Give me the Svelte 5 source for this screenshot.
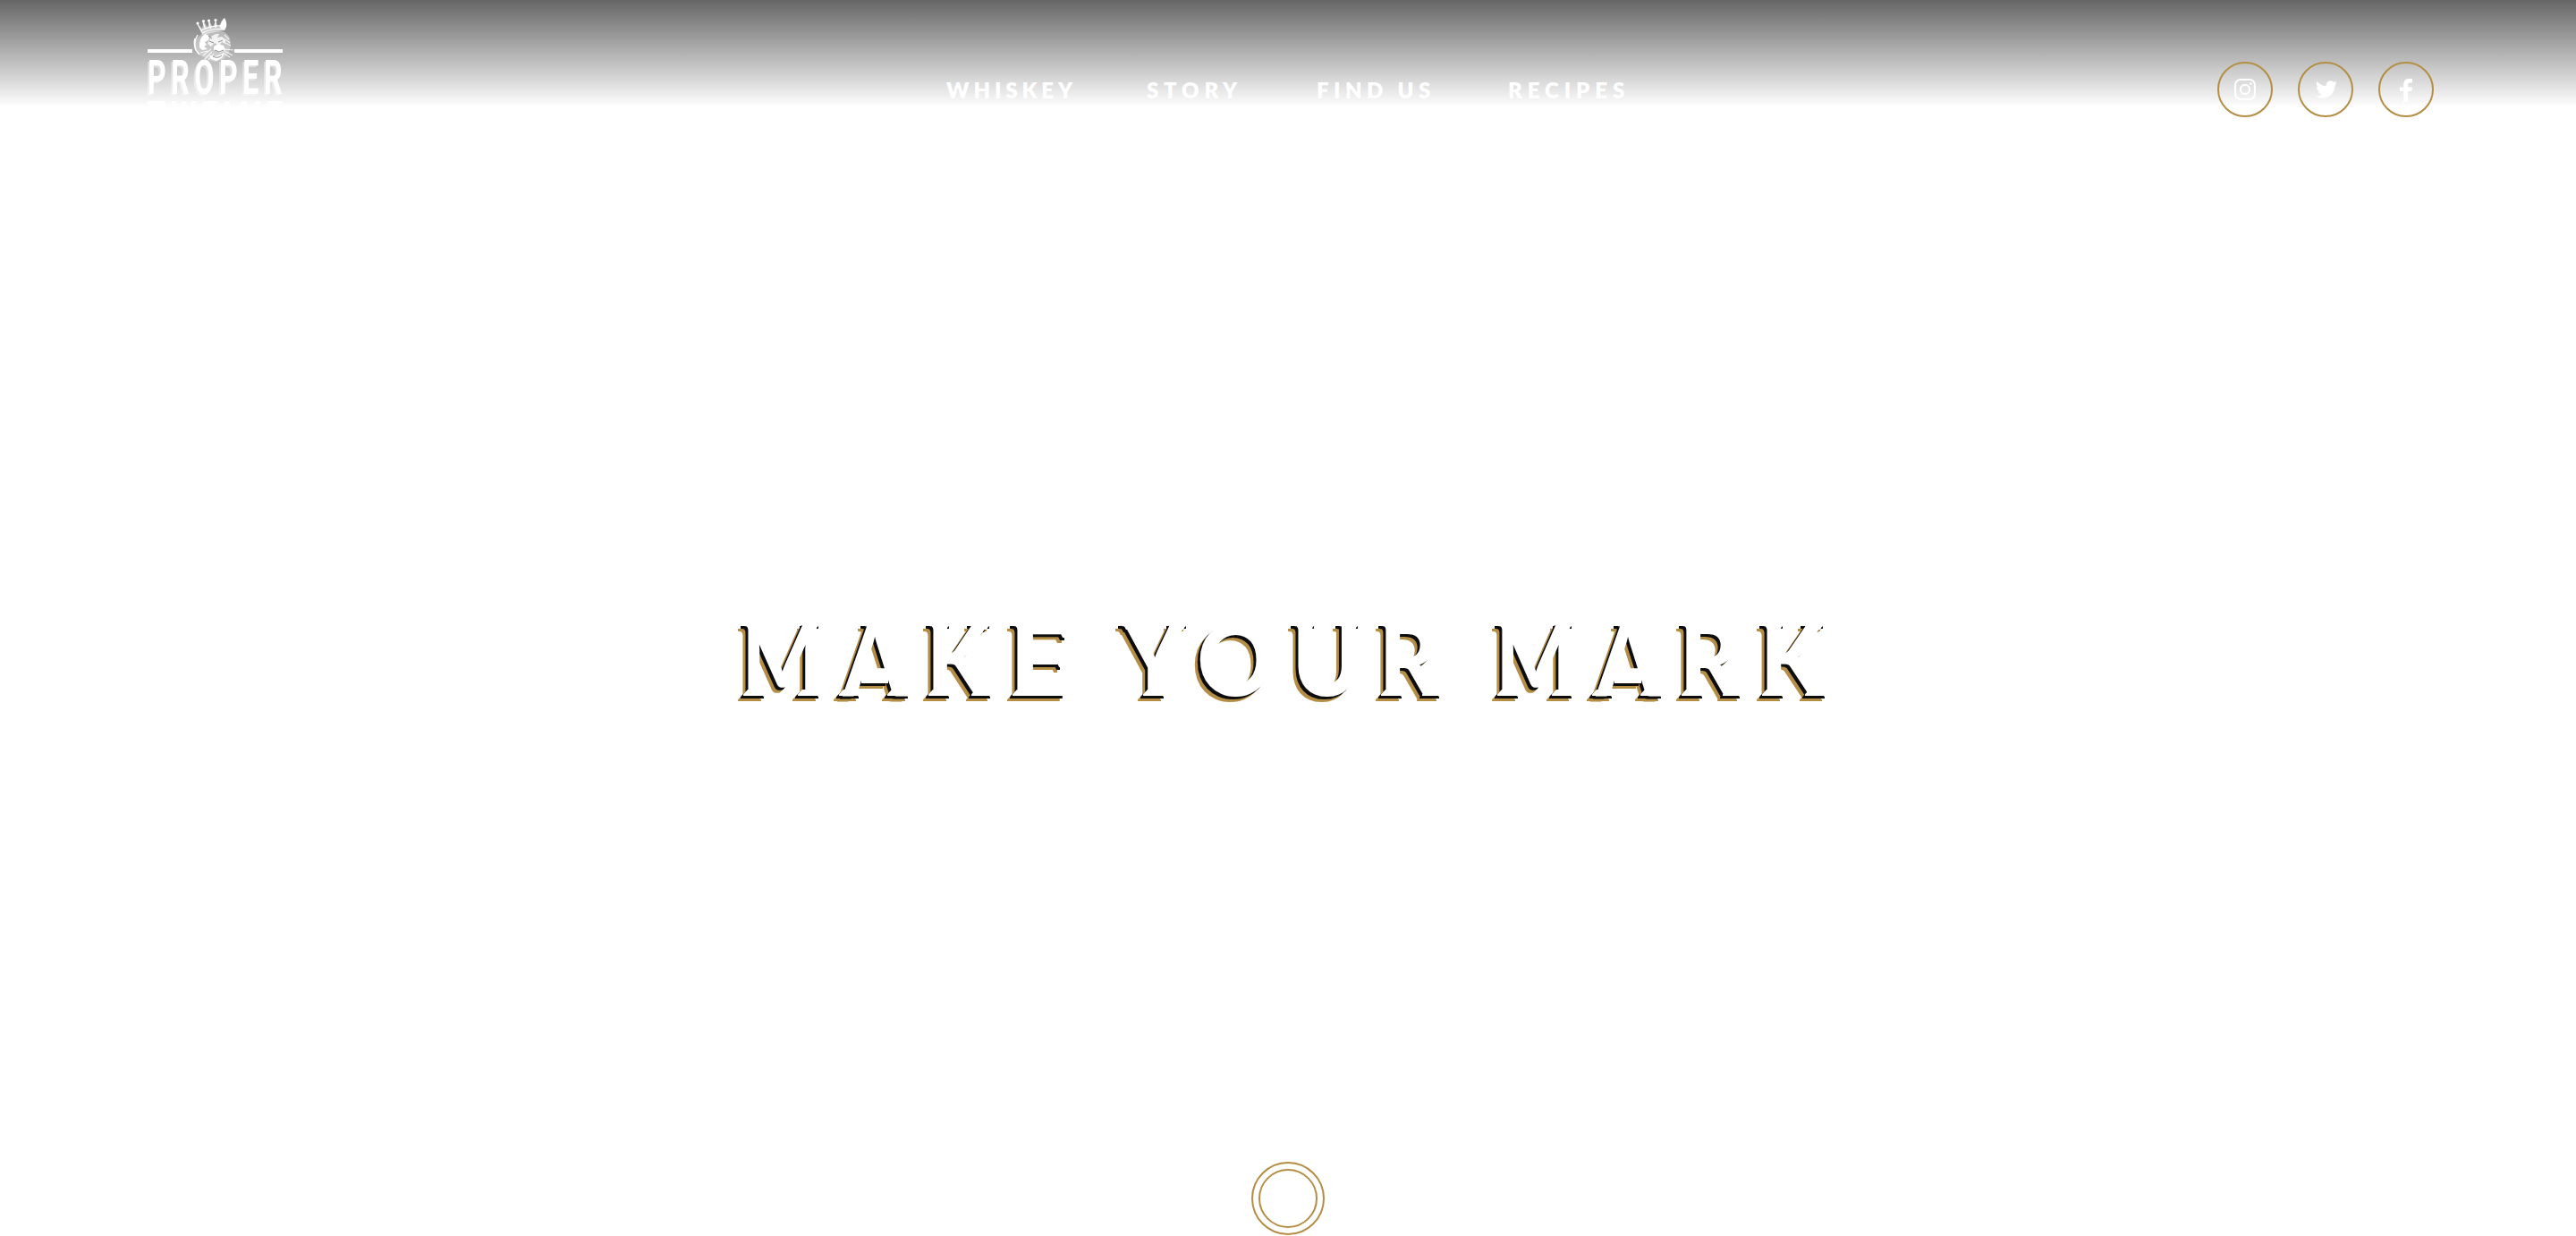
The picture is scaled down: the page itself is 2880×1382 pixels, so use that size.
<script>
  const ctx = document.createElement('canvas').getContext('2d');

  // Ink extents of a string in a given font, used to fit lettering to its box.
  function ink(font, text) {
    ctx.font = font;
    const m = ctx.measureText(text);
    return { left: m.actualBoundingBoxLeft, width: m.actualBoundingBoxLeft + m.actualBoundingBoxRight };
  }

  const headFont = '900 113px Lato';

  // l / r: body of each letter; the other lists are the small serif accents around it.
  const headline = [
    { c: 'M', l: 836, r: 913, feet: [[831, 857], [892, 918]], caps: [[831, 852], [897, 918]] },
    { c: 'A', l: 941, r: 1015, feet: [[938, 963], [992, 1018]], caps: [[965, 985]], bars: [[963, 993]] },
    { c: 'K', l: 1043, r: 1108, feet: [[1038, 1064], [1086, 1110]], caps: [[1038, 1064], [1084, 1109]] },
    { c: 'E', l: 1137, r: 1191, feet: [[1132, 1154]], caps: [[1132, 1154]], arms: [[1180, 1193]], mids: [[1176, 1188]] },
    { c: ' ', l: 1200, r: 1240 },
    { c: 'Y', l: 1255, r: 1327, feet: [[1278, 1304]], caps: [[1253, 1273], [1307, 1329]] },
    { c: 'O', l: 1341, r: 1421 },
    { c: 'U', l: 1451, r: 1516, caps: [[1446, 1472], [1496, 1521]] },
    { c: 'R', l: 1549, r: 1610, feet: [[1544, 1570], [1590, 1612]], caps: [[1544, 1566]] },
    { c: ' ', l: 1620, r: 1660 },
    { c: 'M', l: 1679, r: 1755, feet: [[1674, 1700], [1735, 1760]], caps: [[1674, 1695], [1739, 1760]] },
    { c: 'A', l: 1783, r: 1857, feet: [[1780, 1805], [1834, 1860]], caps: [[1807, 1827]], bars: [[1805, 1835]] },
    { c: 'R', l: 1885, r: 1946, feet: [[1880, 1906], [1926, 1948]], caps: [[1880, 1902]] },
    { c: 'K', l: 1975, r: 2041, feet: [[1970, 1996], [2018, 2043]], caps: [[1970, 1996], [2016, 2041]] }
  ].map((g, i, all) => {
    const advance = (i + 1 < all.length ? all[i + 1].l : g.r) - g.l;
    if (g.c === ' ') return { ...g, advance, scale: 1, shift: 0, serifs: [] };
    const m = ink(headFont, g.c);
    const scale = (g.r - g.l) / m.width;
    const place = (kind, spans = []) => spans.map(([a, b]) => ({ kind, x: a - g.l, w: b - a }));
    const serifs = [
      ...place('foot', g.feet),
      ...place('cap', g.caps),
      ...place('bar', g.bars),
      ...place('arm', g.arms),
      ...place('mid', g.mids)
    ];
    return { ...g, advance, scale, shift: m.left * scale, serifs };
  });

  const nav = [
    { label: 'WHISKEY', left: 1058, right: 1200 },
    { label: 'STORY', left: 1282, right: 1384 },
    { label: 'FIND US', left: 1472, right: 1598 },
    { label: 'RECIPES', left: 1686, right: 1815 }
  ].map((n, i, all) => {
    const m = ink('800 24px Lato', n.label);
    return {
      label: n.label,
      width: n.right - n.left,
      gap: i ? n.left - all[i - 1].right : 0,
      spacing: (n.right - n.left - m.width) / (n.label.length - 1)
    };
  });

  const socials = ['instagram', 'twitter', 'facebook'];
</script>

<div class="page">
  <header>
    <a class="logo" href="#home" aria-label="Proper Twelve">
      <svg viewBox="0 0 160 120" width="160" height="120">
        <g fill="#fff">
          <rect x="5" y="55" width="50" height="4" />
          <rect x="102" y="55" width="54" height="4" />
          <circle cx="61" cy="26" r="1.6" /><circle cx="67.5" cy="23.5" r="1.6" />
          <circle cx="73.5" cy="23" r="1.6" /><circle cx="81" cy="22.5" r="1.6" />
          <path d="M61 27l5 5 2-8 4 7 2-8 4 8 3-8 3 8 4-8 2 11-24 5z" opacity=".55" />
          <path d="M61 27l5 9M67 25l3 8M73.5 24l2 8M81 24v7M66 37q11-6 25-4M65 34q12-6 24-5" fill="none" stroke="#fff" stroke-width="1.2" />
          <path d="M86 31q1-8 5-11 3 5 2 10l-2 4z" />
          <path d="M66 38q-8 4-9 13 1 8 7 11l9 5 8 2 9-3 6-8q3-8 1-15-3-7-9-8-11-1-22 3z" opacity=".35" />
          <path d="M61 39q-5 8-2 17l4 5M58 43q-2 6 1 13" fill="none" stroke="#fff" stroke-width="1.3" />
          <path d="M69 38q-7 5-6 15l3 3 6-1-4-3 3-2-2-3 4-2q3-6-4-7z" />
          <path d="M76 41q5-4 9-3l-2 4 5-1 4 3 0 5-4-2-3 4-5-3-4 4-4-3z" opacity=".8" />
          <path d="M79 52l5-3 6 2 2 5-6 3-7-3z" />
          <path d="M74 62l6 1 6-2 5-2-3 6-6 3-6-2z" />
          <path d="M91 39l5 5M92 44l5 4M92 48l6 3M91 55l10 1M91 57l9 5M89 59l8 5M76 55l-9 7M77 58l-8 8M79 60l-6 7M72 57l-8 2" fill="none" stroke="#fff" stroke-width="1.1" opacity=".85" />
          <path d="M74 46l5 2M84 47l5-2M80 56l5 2 5-2M78 63q5 3 10-1M73 40l4 3" fill="none" stroke="#8f8f8f" stroke-width="1" />
        </g>
        <g class="wordmark">
          <text x="5" y="105" textLength="156" lengthAdjust="spacingAndGlyphs">PROPER</text>
          <text x="5" y="151" textLength="156" lengthAdjust="spacingAndGlyphs">TWELVE</text>
        </g>
      </svg>
    </a>

    <nav>
      {#each nav as item}
        <a href="#top" style:width="{item.width}px" style:margin-left="{item.gap}px" style:letter-spacing="{item.spacing}px">{item.label}</a>
      {/each}
    </nav>

    <div class="socials">
      {#each socials as name}
        <a href="#social" aria-label={name}>
          {#if name === 'instagram'}
            <svg viewBox="0 0 24 24" width="24" height="24" fill="none" stroke="#fff" stroke-width="2.1">
              <rect x="1.05" y="1.05" width="21.9" height="21.9" rx="6" />
              <circle cx="12" cy="12" r="5.1" />
              <circle cx="18.4" cy="5.6" r="1.45" fill="#fff" stroke="none" />
            </svg>
          {:else if name === 'twitter'}
            <svg class="bird" viewBox="0 0 24 24" width="24" height="24" fill="#fff">
              <path d="M23.95 4.57a10 10 0 0 1-2.82.77 4.96 4.96 0 0 0 2.16-2.72c-.95.55-2 .95-3.13 1.18a4.92 4.92 0 0 0-8.38 4.48C7.69 8.1 4.07 6.13 1.64 3.16a4.92 4.92 0 0 0 1.52 6.57 4.9 4.9 0 0 1-2.23-.61v.06a4.92 4.92 0 0 0 3.95 4.83 5 5 0 0 1-2.21.08 4.94 4.94 0 0 0 4.6 3.42A9.87 9.87 0 0 1 0 19.54a13.99 13.99 0 0 0 7.55 2.21c9.05 0 14-7.5 14-13.98 0-.21 0-.42-.02-.63a9.94 9.94 0 0 0 2.42-2.57z" />
            </svg>
          {:else}
            <svg class="eff" viewBox="0 0 14 26" width="14" height="26" fill="#fff">
              <path d="M4.3 26V14H0V9.5h4.3V6.2C4.3 2.2 6.5 0 10.2 0H14v4.4h-2.6C9.7 4.4 9.2 5.1 9.2 6.5v3H14l-.6 4.5H9.2V26z" />
            </svg>
          {/if}
        </a>
      {/each}
    </div>
  </header>

  <main>
    <h1 aria-label="MAKE YOUR MARK">{#each headline as g}<span class="letter" style:width="{g.advance}px"><span class="glyph" style:transform="translateX({g.shift}px) scaleX({g.scale})">{g.c}</span>{#each g.serifs as s}<i class={s.kind} style:left="{s.x}px" style:width="{s.w}px"></i>{/each}</span>{/each}</h1>
  </main>

  <footer>
    <button aria-label="Scroll down"><span></span></button>
  </footer>
</div>

<style>
  :global(body) {
    margin: 0;
    background: #fff;
  }
  .page {
    box-sizing: border-box;
    width: 2880px;
    height: 1382px;
    display: flex;
    flex-direction: column;
    overflow: hidden;
    font-family: Lato, 'Open Sans', sans-serif;
    color: #fff;
  }
  a {
    color: inherit;
    text-decoration: none;
  }
  header {
    height: 140px;
    flex: none;
    display: grid;
    grid-template-columns: 898px 761px 1fr;
    padding-left: 160px;
    background: linear-gradient(rgba(0, 0, 0, 0.6), transparent) 0 0 / 100% 120px no-repeat;
  }
  .logo svg {
    display: block;
    overflow: visible;
  }
  .wordmark text {
    font: 700 53px Roboto, sans-serif;
    letter-spacing: 9px;
    fill: #fff;
    filter: drop-shadow(-2px 2px 0 rgba(255, 255, 255, 0.4));
  }
  nav {
    display: flex;
    padding-top: 86px;
  }
  nav a {
    flex: none;
    font: 800 24px/30px Lato, sans-serif;
    white-space: nowrap;
  }
  .socials {
    display: flex;
    gap: 28px;
    justify-content: flex-end;
    padding: 69px 159px 0 0;
  }
  .socials a {
    box-sizing: border-box;
    width: 62px;
    height: 62px;
    border: 2px solid #b58e46;
    border-radius: 50%;
    display: flex;
    align-items: center;
    justify-content: center;
  }
  .socials .bird {
    padding-left: 2px;
  }
  .socials .eff {
    padding-top: 2px;
  }
  main {
    flex: 1;
    padding: 538px 0 0 836px;
  }
  h1 {
    margin: 0;
    font: 900 113px/113px Lato, sans-serif;
    white-space: pre;
    filter: drop-shadow(-3px 3px 0 #0d0d0d) drop-shadow(-3px 3px 0 #b58e46);
  }
  .letter {
    display: inline-block;
    position: relative;
    height: 113px;
    vertical-align: top;
  }
  .glyph {
    display: inline-block;
    transform-origin: 0 0;
  }
  .letter i {
    position: absolute;
    background: #fff;
  }
  .letter .foot {
    top: 93px;
    height: 7px;
    clip-path: polygon(0 100%, 0 75%, 5px 0, calc(100% - 5px) 0, 100% 75%, 100% 100%);
  }
  .letter .cap {
    top: 19px;
    height: 7px;
    clip-path: polygon(0 0, 0 40%, 4px 50%, 6px 100%, calc(100% - 6px) 100%, calc(100% - 4px) 50%, 100% 40%, 100% 0);
  }
  .letter .bar {
    top: 80px;
    height: 6px;
  }
  .letter .arm {
    top: 19px;
    height: 16px;
    clip-path: polygon(0 0, 90% 0, 100% 100%, 62% 100%, 40% 64%, 0 64%);
  }
  .letter .mid {
    top: 52px;
    height: 16px;
    clip-path: polygon(0 0, 100% 0, 100% 100%, 68% 100%, 50% 72%, 0 72%);
  }
  footer {
    flex: none;
    display: flex;
    justify-content: center;
    padding-bottom: 1px;
  }
  button {
    box-sizing: border-box;
    width: 82px;
    height: 82px;
    padding: 6px;
    border: 2px solid #b58e46;
    border-radius: 50%;
    background: none;
  }
  button span {
    box-sizing: border-box;
    display: block;
    width: 66px;
    height: 66px;
    border: 2px solid #b58e46;
    border-radius: 50%;
  }
</style>
